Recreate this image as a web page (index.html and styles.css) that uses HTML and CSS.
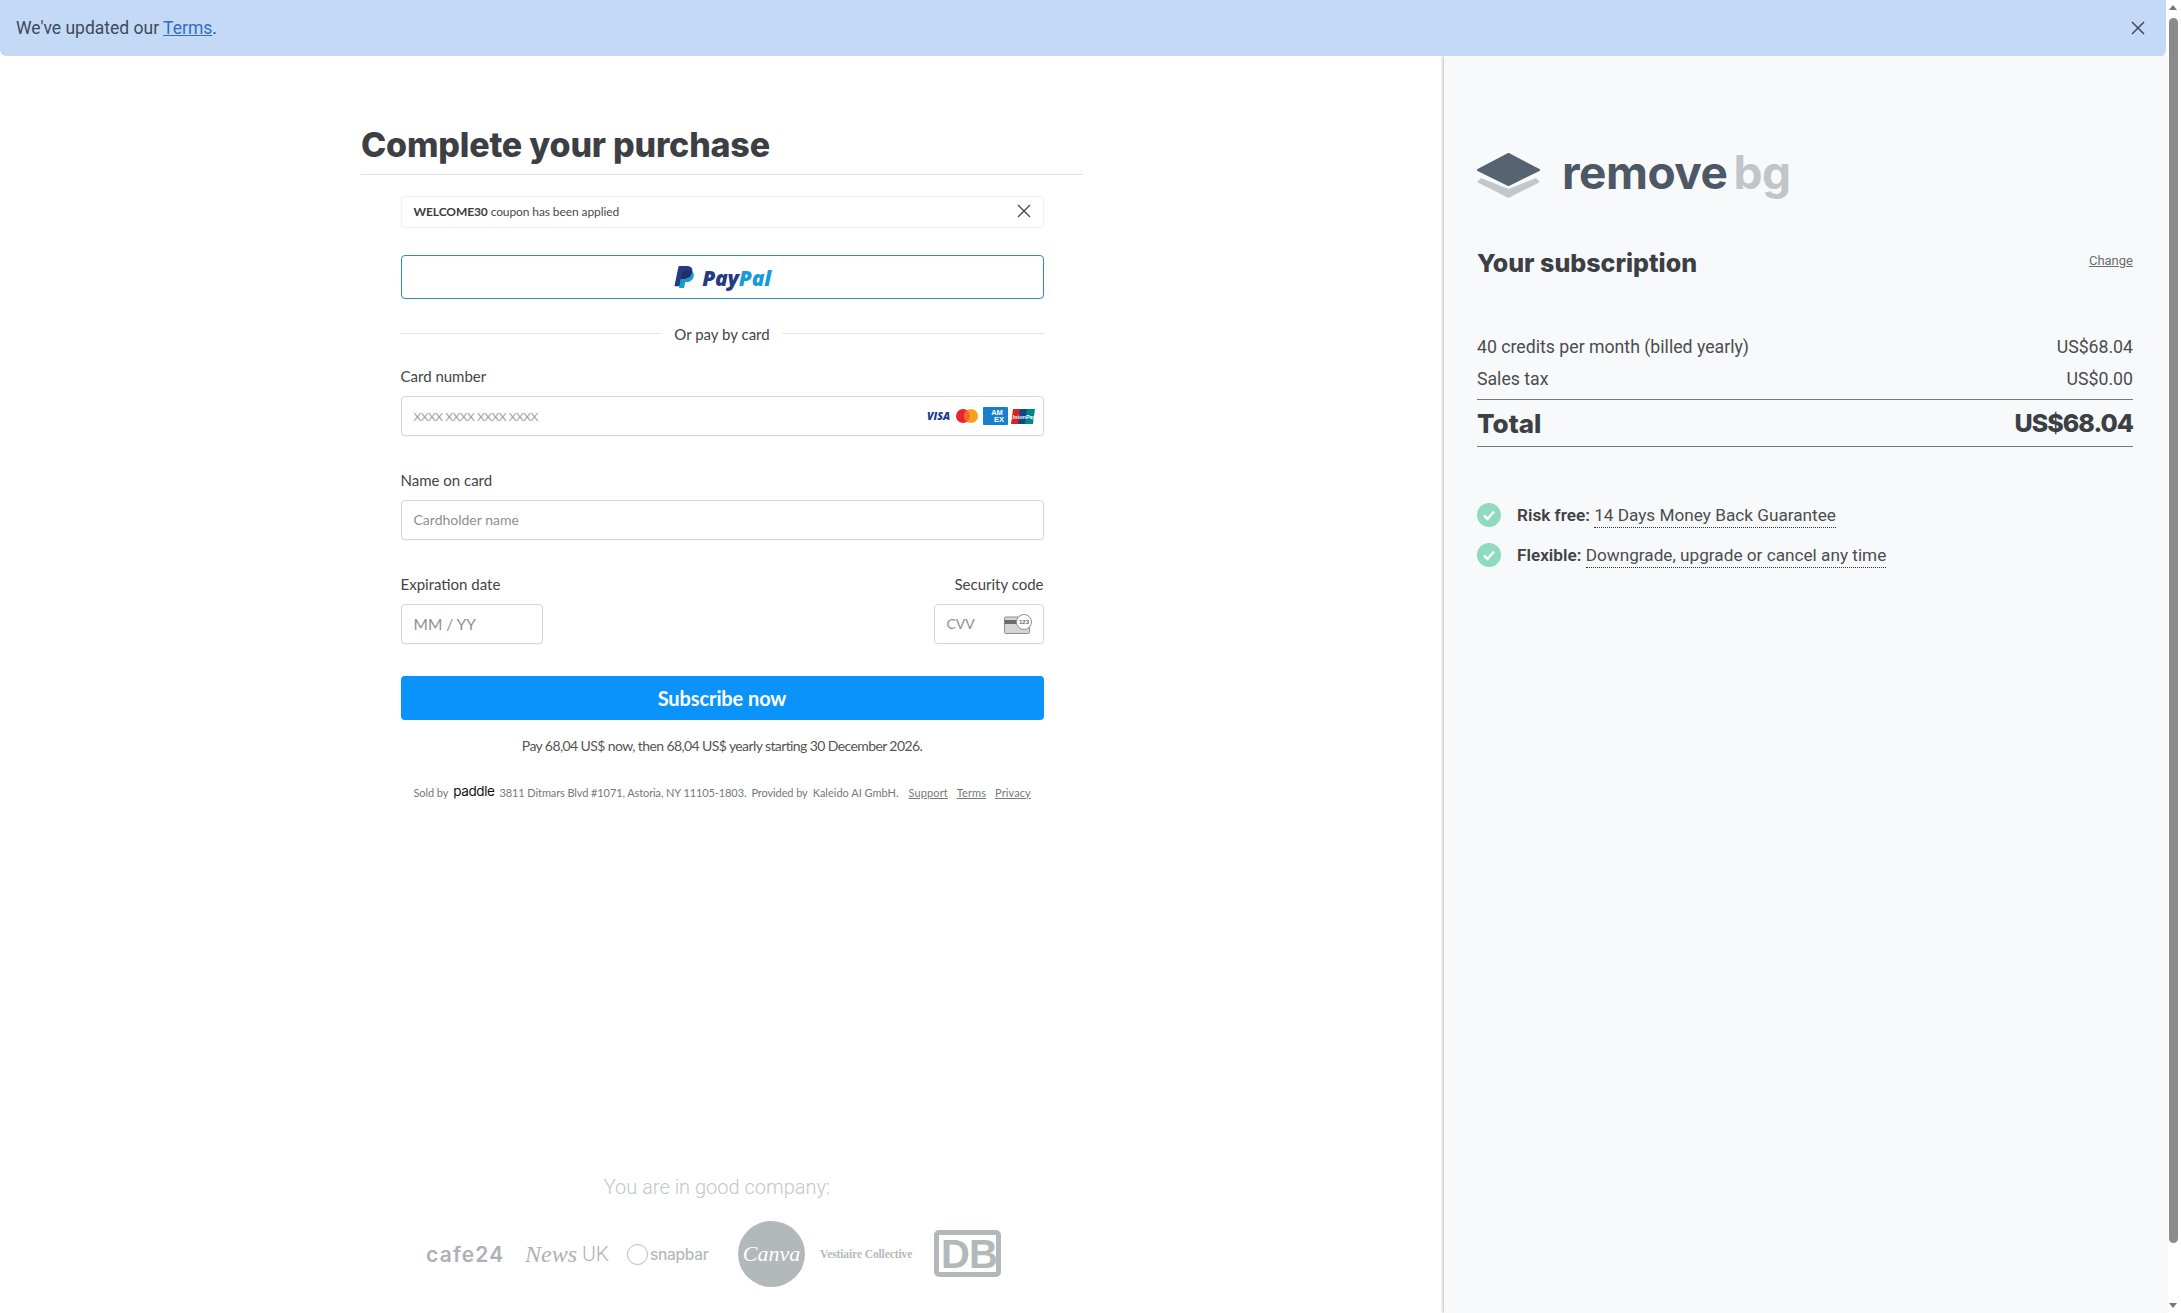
FILE: index.html
```html
<!DOCTYPE html>
<html lang="en">
<head>
<meta charset="utf-8">
<title>Complete your purchase</title>
<link rel="stylesheet" href="styles.css">
</head>
<body>
<div class="page">
  <div class="viewport">
    <div class="banner">
      <p class="banner-text">We've updated our <a href="#" class="banner-link">Terms</a>.</p>
      <svg class="banner-close" viewBox="0 0 14 14"><path d="M1 1l12 12M13 1L1 13"/></svg>
    </div>
    <div class="columns">
      <main class="main">
        <header class="main-head"><h1 class="title">Complete your purchase</h1></header>
        <div class="form">
          <div class="coupon">
            <span class="coupon-text"><b class="coupon-code">WELCOME30</b> coupon has been applied</span>
            <svg class="coupon-close" viewBox="0 0 14 14"><path d="M1 1l12 12M13 1L1 13"/></svg>
          </div>
          <button class="paypal" type="button">
            <svg class="paypal-mark" viewBox="0 0 24 27">
              <path fill="#253b80" d="M7.300 1h7.500c2.500 0 4.400.6 5.400 1.800.9 1.100 1.200 2.500.9 4.200-.7 4.600-3.600 7.600-8.400 7.600h-2.400c-.5 0-1 .4-1.100.9L8 23H2.300c-.4 0-.7-.4-.6-.8L5.900 2c.1-.6.7-1 1.400-1z"/>
              <path fill="#179bd7" d="M21 7c1.500 1.100 2 2.900 1.600 5-.8 4.300-3.700 6.300-7.800 6.300h-.7c-.5 0-.9.400-1 .9l-.8 5c-.1.500-.5.800-1 .800H7.200c-.3 0-.6-.3-.5-.6L8 16.500 9.500 15h3c4.500 0 7.600-3 8.500-8z"/>
              <path fill="#222d65" d="M9.500 15h3c4.500 0 7.600-3 8.500-8-.8-.5-2-.8-3.300-.8h-6.200c-.5 0-.9.300-1 .8L9 14z"/>
            </svg>
            <span class="paypal-word"><span class="pay-dark">Pay</span><span class="pay-light">Pal</span></span>
          </button>
          <div class="divider"><span class="divider-text">Or pay by card</span></div>

          <div class="label first-label">Card number</div>
          <div class="input">
            <span class="ph ph-small">xxxx xxxx xxxx xxxx</span>
            <div class="cards">
              <svg class="card-visa" viewBox="0 0 24 12"><text x="12" y="10.500" text-anchor="middle" class="visa-text">VISA</text></svg>
              <svg class="card-mc" viewBox="0 0 22 14"><circle cx="7" cy="7" r="7" fill="#e8242c"/><circle cx="15" cy="7" r="7" fill="#f7a01e"/><path d="M11 1.300a7 7 0 0 1 0 11.400 7 7 0 0 1 0-11.400z" fill="#f2682a"/></svg>
              <svg class="card-amex" viewBox="0 0 25 18"><rect width="25" height="18" rx="1" fill="#1a7fc9"/><text x="14" y="8" text-anchor="middle" class="amex-text">AM</text><text x="16" y="15" text-anchor="middle" class="amex-text">EX</text></svg>
              <svg class="card-up" viewBox="0 0 24 15"><path d="M2 0h9L9 15H0z" fill="#d2232a"/><path d="M9 0h9l-2 15H7z" fill="#14477f"/><path d="M16 0h8l-2 15h-8z" fill="#00868a"/><text x="12" y="9.500" text-anchor="middle" class="up-text">UnionPay</text></svg>
            </div>
          </div>

          <div class="label gap-label">Name on card</div>
          <div class="input"><span class="ph">Cardholder name</span></div>

          <div class="pair">
            <div class="pair-item">
              <div class="label">Expiration date</div>
              <div class="input input-date"><span class="ph ph-date">MM / YY</span></div>
            </div>
            <div class="pair-item pair-right">
              <div class="label">Security code</div>
              <div class="input input-cvv">
                <span class="ph">CVV</span>
                <svg class="cvv-icon" viewBox="0 0 28 20">
                  <rect x="0.500" y="3" width="25" height="16.500" rx="1" fill="#d5d5d5" stroke="#8f8f8f"/>
                  <rect x="0.500" y="6" width="25" height="4" fill="#6d6d6d"/>
                  <circle cx="20" cy="8" r="7.500" fill="#fff" stroke="#8f8f8f"/>
                  <text x="20" y="10" text-anchor="middle" class="cvv-digits">123</text>
                </svg>
              </div>
            </div>
          </div>

          <button class="subscribe" type="button">Subscribe now</button>
          <p class="pay-note">Pay 68,04 US$ now, then 68,04 US$ yearly starting 30 December 2026.</p>
          <div class="legal">
            <span>Sold by</span>
            <span class="paddle">paddle</span>
            <span>3811 Ditmars Blvd #1071, Astoria, NY 11105-1803.</span>
            <span>Provided by</span>
            <span class="legal-company">Kaleido AI GmbH.</span>
            <a href="#" class="legal-link legal-first">Support</a>
            <a href="#" class="legal-link">Terms</a>
            <a href="#" class="legal-link">Privacy</a>
          </div>
        </div>

        <section class="company">
          <p class="company-title">You are in good company:</p>
          <div class="logos">
            <span class="logo logo-cafe">cafe24</span>
            <span class="logo logo-news"><i class="news-script">News</i> <span class="news-uk">UK</span></span>
            <span class="logo logo-snap"><span class="snap-ring"></span>snapbar</span>
            <span class="logo logo-canva">Canva</span>
            <span class="logo logo-vest">Vestiaire Collective</span>
            <span class="logo logo-db"><span class="db-inner">DB</span></span>
          </div>
        </section>
      </main>

      <aside class="panel">
        <div class="brand">
          <svg class="brand-mark" viewBox="0 0 63 45">
            <path fill="#566370" stroke="#566370" stroke-width="2" stroke-linejoin="round" d="M31.500 1L62 17 31.500 32 1 17z"/>
            <path fill="#c2c7cb" d="M4 25l27.500 11L59 25l4 4-31.500 16L0 29z"/>
          </svg>
          <span class="brand-word"><span class="brand-dark">remove</span><span class="brand-light">bg</span></span>
        </div>
        <div class="sub-head">
          <h2 class="sub-title">Your subscription</h2>
          <a href="#" class="change">Change</a>
        </div>
        <div class="rows">
          <div class="row"><span>40 credits per month (billed yearly)</span><span>US$68.04</span></div>
          <div class="row"><span>Sales tax</span><span>US$0.00</span></div>
        </div>
        <div class="total"><span class="total-label">Total</span><span class="total-value">US$68.04</span></div>
        <ul class="perks">
          <li class="perk">
            <svg class="check" viewBox="0 0 24 24"><circle cx="12" cy="12" r="12" fill="#8edbc0"/><path d="M7 12.500l3.500 3.500L17 8.500" fill="none" stroke="#fff" stroke-width="2.500"/></svg>
            <span><b class="perk-key">Risk free:</b> <span class="perk-val">14 Days Money Back Guarantee</span></span>
          </li>
          <li class="perk">
            <svg class="check" viewBox="0 0 24 24"><circle cx="12" cy="12" r="12" fill="#8edbc0"/><path d="M7 12.500l3.500 3.500L17 8.500" fill="none" stroke="#fff" stroke-width="2.500"/></svg>
            <span><b class="perk-key">Flexible:</b> <span class="perk-val">Downgrade, upgrade or cancel any time</span></span>
          </li>
        </ul>
      </aside>
    </div>
  </div>
  <div class="scrollbar">
    <span class="arrow arrow-up"></span>
    <span class="thumb"></span>
    <span class="arrow arrow-down"></span>
  </div>
</div>
</body>
</html>
```
FILE: styles.css
```css
* { box-sizing: border-box; }
html, body { margin: 0; padding: 0; height: 100%; overflow: hidden; background: #fff; }
body { font-family: "Lato", sans-serif; color: #3f4245; }
p, h1, h2, ul { margin: 0; padding: 0; }
a { color: inherit; }

.page { display: flex; width: 2181px; height: 1313px; overflow: hidden; }
.viewport { width: 2166px; display: flex; flex-direction: column; position: relative; }

/* banner */
.banner { flex: none; height: 56px; background: #c4d9f6; border-radius: 0 0 6px 6px; display: flex; align-items: center; justify-content: space-between; padding: 0 21px 0 16px; position: relative; z-index: 2; }
.banner-text { font-family: "Roboto", sans-serif; font-size: 17.500px; color: #3d4a5c; }
.banner-link { color: #2f6fc4; }
.banner-close { width: 14px; height: 14px; fill: none; stroke: #3d4a5c; stroke-width: 1.500; }

.columns { flex: 1; display: flex; min-height: 0; }

/* left */
.main { width: 1444px; flex: none; display: flex; flex-direction: column; align-items: center; }
.main-head { width: 722px; margin-top: 68px; padding-bottom: 10px; border-bottom: 1px solid #e2e2e2; }
.title { font-family: "Inter", sans-serif; font-weight: 800; font-size: 34px; line-height: 42px; height: 40px; color: #3c3f44; letter-spacing: -0.2px; }
.form { width: 643px; display: flex; flex-direction: column; }

.coupon { margin-top: 21px; height: 32px; border: 1px solid #f1f1f1; border-radius: 3px; display: flex; align-items: center; justify-content: space-between; padding: 0 12px 2px 12px; box-shadow: 0 0 2px rgba(0,0,0,.04); }
.coupon-text { font-size: 12px; color: #4a4a4a; letter-spacing: -0.1px; }
.coupon-code { font-weight: 700; color: #3c3c3c; }
.coupon-close { width: 14px; height: 14px; fill: none; stroke: #4a4a4a; stroke-width: 1.400; }

.paypal { margin-top: 27px; height: 44px; background: #fff; border: 1px solid #2a8fb4; border-radius: 4px; display: flex; align-items: center; justify-content: center; gap: 7px; padding: 0; }
.paypal-mark { width: 22px; height: 25px; }
.paypal-word { font-family: "Open Sans", sans-serif; font-weight: 800; font-style: italic; font-size: 21px; line-height: 24px; margin-top: 2px; letter-spacing: -0.2px; }
.pay-dark { color: #253b80; }
.pay-light { color: #179bd7; }

.divider { margin-top: 25px; height: 20px; display: flex; align-items: center; gap: 12px; }
.divider::before, .divider::after { content: ""; flex: 1; height: 1px; background: #e4e4e4; margin-top: -2px; }
.divider-text { font-size: 15px; line-height: 20px; color: #444; }

.label { font-size: 15px; line-height: 18px; height: 20px; color: #444; }
.first-label { margin-top: 23px; }
.gap-label { margin-top: 35px; }

.input { margin-top: 9px; height: 40px; border: 1px solid #d6d6d6; border-radius: 4px; display: flex; align-items: center; justify-content: space-between; padding: 0 12px; box-shadow: 0 1px 2px rgba(0,0,0,.05); }
.ph { font-size: 14px; color: #8f8f8f; margin-top: -1px; }
.ph-small { font-size: 12px; color: #a3a3a3; text-transform: uppercase; letter-spacing: -0.5px; margin-top: 0; }
.ph-date { font-size: 15.500px; }

.cards { display: flex; align-items: center; gap: 3px; margin-right: -4px; }
.card-visa { width: 23px; height: 12px; margin-right: 3px; }
.card-mc { width: 22px; height: 14px; margin-right: 2px; }
.card-amex { width: 25px; height: 18px; }
.card-up { width: 24px; height: 15px; }
.visa-text { font-family: "Open Sans", sans-serif; font-weight: 800; font-style: italic; font-size: 11px; fill: #1a3a8f; }
.amex-text { font-family: "Liberation Sans", sans-serif; font-weight: 700; font-size: 7.500px; fill: #fff; }
.up-text { font-family: "Liberation Sans", sans-serif; font-weight: 700; font-size: 5.500px; fill: #fff; }

.pair { margin-top: 35px; display: flex; justify-content: space-between; }
.pair-right { display: flex; flex-direction: column; align-items: flex-end; }
.input-date { width: 142px; }
.input-cvv { width: 110px; padding-right: 11px; }
.cvv-icon { width: 28px; height: 20px; }
.cvv-digits { font-family: "Liberation Sans", sans-serif; font-size: 6px; font-weight: 700; fill: #666; }

.subscribe { margin-top: 32px; height: 44px; border: 0; border-radius: 4px; background: #0a93fb; color: #fff; font-family: "Lato", sans-serif; font-weight: 700; font-size: 20px; letter-spacing: -0.1px; padding: 0; }
.pay-note { margin-top: 16px; text-align: center; font-size: 14px; line-height: 20px; letter-spacing: -0.6px; color: #555; }

.legal { margin-top: 26px; height: 20px; display: flex; align-items: center; padding-left: 13px; font-size: 11px; letter-spacing: -0.1px; color: #777; gap: 5px; white-space: nowrap; }
.paddle { font-family: "Inter", sans-serif; font-size: 13.500px; font-weight: 400; letter-spacing: -0.4px; color: #111; margin-top: -2px; }
.legal-company { letter-spacing: 0; }
.legal-link { margin-left: 4px; letter-spacing: 0.1px; }
.legal-first { margin-left: 5px; }

.company { margin-top: auto; align-self: flex-start; margin-left: 426px; width: 582px; padding-bottom: 26px; display: flex; flex-direction: column; }
.company-title { font-family: "Roboto", sans-serif; font-weight: 300; font-size: 20px; line-height: 20px; text-align: center; color: #c4c6c9; }
.logos { margin-top: 24px; width: 575px; height: 66px; display: flex; align-items: center; color: #b5b9bd; }
.logo { flex: none; display: flex; align-items: center; white-space: nowrap; }
.logo-cafe { width: 79px; margin-right: 20px; font-family: "Inter", sans-serif; font-weight: 600; font-size: 21px; letter-spacing: 1.200px; color: #aeb2b6; }
.logo-news { width: 82px; margin-right: 20px; gap: 5px; color: #aeb2b6; }
.news-script { font-family: "Liberation Serif", serif; font-size: 24px; font-style: italic; }
.news-uk { font-family: "Roboto", sans-serif; font-weight: 300; font-size: 21px; }
.logo-snap { width: 80px; margin-right: 31px; font-family: "Inter", sans-serif; font-weight: 500; font-size: 15.500px; letter-spacing: -0.3px; gap: 2px; }
.snap-ring { width: 21px; height: 21px; flex: none; border: 1.500px solid #b5b9bd; border-radius: 50%; }
.logo-canva { width: 67px; height: 66px; margin-right: 15px; border-radius: 50%; background: #b3b8bb; color: #fff; justify-content: center; font-family: "Liberation Serif", serif; font-style: italic; font-size: 22px; }
.logo-vest { width: 93px; margin-right: 21px; font-family: "Liberation Serif", serif; font-weight: 700; font-size: 11.500px; letter-spacing: -0.1px; }
.logo-db { width: 67px; height: 47px; margin-top: -1px; border: 5px solid #b3b8bb; border-radius: 5px; padding: 2px; }
.db-inner { flex: 1; height: 100%; display: flex; align-items: center; justify-content: center; font-family: "Liberation Sans", sans-serif; font-weight: 700; font-size: 40px; line-height: 1; color: #b3b8bb; letter-spacing: -1px; }

/* right */
.panel { flex: 1; background: #f8f9fa; box-shadow: -1px 0 3px rgba(0,0,0,.28); padding: 97px 33px 0 33px; font-family: "Roboto", sans-serif; color: #3f4245; position: relative; z-index: 1; }
.brand { display: flex; align-items: center; gap: 22px; height: 45px; }
.brand-mark { width: 63px; height: 45px; flex: none; }
.brand-word { font-family: "Inter", sans-serif; font-weight: 700; font-size: 46px; line-height: 45px; letter-spacing: -0.5px; margin-bottom: 6px; }
.brand-dark { color: #4d5866; }
.brand-light { color: #c0c5ca; margin-left: 6px; }

.sub-head { margin-top: 47px; height: 36px; display: flex; align-items: center; justify-content: space-between; }
.sub-title { font-family: "Inter", sans-serif; font-weight: 800; font-size: 25px; line-height: 36px; color: #3c3f44; }
.change { font-size: 13px; color: #6a6d70; margin-bottom: 6px; }

.rows { margin-top: 50px; display: flex; flex-direction: column; }
.row { height: 32px; display: flex; align-items: center; justify-content: space-between; font-size: 17.700px; color: #4a4d50; }
.total { margin-top: 4px; height: 48px; border-top: 1px solid #777; border-bottom: 1px solid #777; display: flex; align-items: center; justify-content: space-between; font-family: "Inter", sans-serif; font-weight: 800; font-size: 26px; color: #3c3f44; }
.total-value { font-size: 25px; letter-spacing: -1px; }

.perks { list-style: none; margin-top: 56px; display: flex; flex-direction: column; gap: 16px; }
.perk { height: 24px; display: flex; align-items: center; gap: 16px; font-size: 17.200px; color: #4a4d50; }
.check { width: 24px; height: 24px; flex: none; }
.perk-key { font-weight: 600; color: #3f4245; }
.perk-val { border-bottom: 1px dotted #333; padding-bottom: 2px; }

/* scrollbar */
.scrollbar { width: 15px; flex: none; background: #fff; display: flex; flex-direction: column; align-items: center; position: relative; }
.thumb { position: absolute; top: 18px; left: 3px; width: 9px; height: 1225px; border-radius: 5px; background: #8b8b8b; }
.arrow { position: absolute; left: 3px; width: 0; height: 0; border-left: 4.500px solid transparent; border-right: 4.500px solid transparent; }
.arrow-up { top: 5px; border-bottom: 5px solid #777; }
.arrow-down { bottom: 5px; border-top: 5px solid #777; }
```
